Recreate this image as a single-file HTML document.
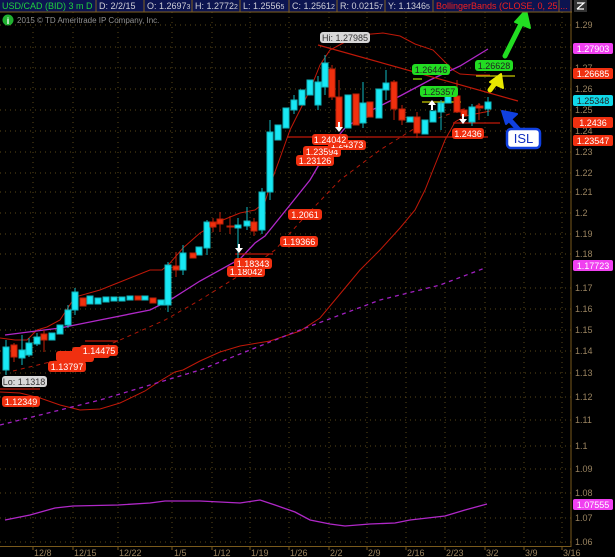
<!DOCTYPE html>
<html><head><meta charset="utf-8"><style>
html,body{margin:0;padding:0;background:#000;width:615px;height:557px;overflow:hidden}
svg{display:block}
text{font-family:"Liberation Sans",sans-serif}
</style></head><body>
<svg width="615" height="557" viewBox="0 0 615 557" xmlns="http://www.w3.org/2000/svg">
<rect width="615" height="557" fill="#000"/>
<!-- grid -->
<g stroke="#5a4818" stroke-width="1" stroke-dasharray="1,4">
<line x1="0" x2="571" y1="25" y2="25"/><line x1="0" x2="571" y1="47" y2="47"/><line x1="0" x2="571" y1="68" y2="68"/><line x1="0" x2="571" y1="89" y2="89"/><line x1="0" x2="571" y1="110" y2="110"/><line x1="0" x2="571" y1="131" y2="131"/><line x1="0" x2="571" y1="152" y2="152"/><line x1="0" x2="571" y1="173" y2="173"/><line x1="0" x2="571" y1="192" y2="192"/><line x1="0" x2="571" y1="213" y2="213"/><line x1="0" x2="571" y1="234" y2="234"/><line x1="0" x2="571" y1="254" y2="254"/><line x1="0" x2="571" y1="288" y2="288"/><line x1="0" x2="571" y1="309" y2="309"/><line x1="0" x2="571" y1="330" y2="330"/><line x1="0" x2="571" y1="351" y2="351"/><line x1="0" x2="571" y1="373" y2="373"/><line x1="0" x2="571" y1="397" y2="397"/><line x1="0" x2="571" y1="420" y2="420"/><line x1="0" x2="571" y1="446" y2="446"/><line x1="0" x2="571" y1="469" y2="469"/><line x1="0" x2="571" y1="493" y2="493"/><line x1="0" x2="571" y1="518" y2="518"/><line x1="0" x2="571" y1="542" y2="542"/>
<line x1="33" x2="33" y1="12" y2="546"/><line x1="73" x2="73" y1="12" y2="546"/><line x1="118" x2="118" y1="12" y2="546"/><line x1="172" x2="172" y1="12" y2="546"/><line x1="212" x2="212" y1="12" y2="546"/><line x1="250" x2="250" y1="12" y2="546"/><line x1="289" x2="289" y1="12" y2="546"/><line x1="329" x2="329" y1="12" y2="546"/><line x1="367" x2="367" y1="12" y2="546"/><line x1="406" x2="406" y1="12" y2="546"/><line x1="445" x2="445" y1="12" y2="546"/><line x1="485" x2="485" y1="12" y2="546"/><line x1="524" x2="524" y1="12" y2="546"/><line x1="562" x2="562" y1="12" y2="546"/>
</g>
<!-- axes -->
<line x1="571" y1="12" x2="571" y2="547" stroke="#7a5a1c"/>
<line x1="0" y1="546.5" x2="571" y2="546.5" stroke="#7a5a1c"/>
<g stroke="#7a5a1c"><line x1="33" x2="33" y1="546" y2="550"/><line x1="73" x2="73" y1="546" y2="550"/><line x1="118" x2="118" y1="546" y2="550"/><line x1="172" x2="172" y1="546" y2="550"/><line x1="212" x2="212" y1="546" y2="550"/><line x1="250" x2="250" y1="546" y2="550"/><line x1="289" x2="289" y1="546" y2="550"/><line x1="329" x2="329" y1="546" y2="550"/><line x1="367" x2="367" y1="546" y2="550"/><line x1="406" x2="406" y1="546" y2="550"/><line x1="445" x2="445" y1="546" y2="550"/><line x1="485" x2="485" y1="546" y2="550"/><line x1="524" x2="524" y1="546" y2="550"/><line x1="562" x2="562" y1="546" y2="550"/></g>
<g fill="#9a8460" font-size="9">
<text x="575" y="28">1.29</text><text x="575" y="71">1.27</text><text x="575" y="92">1.26</text><text x="575" y="113">1.25</text><text x="575" y="134">1.24</text><text x="575" y="155">1.23</text><text x="575" y="176">1.22</text><text x="575" y="195">1.21</text><text x="575" y="216">1.2</text><text x="575" y="237">1.19</text><text x="575" y="257">1.18</text><text x="575" y="291">1.17</text><text x="575" y="312">1.16</text><text x="575" y="333">1.15</text><text x="575" y="354">1.14</text><text x="575" y="376">1.13</text><text x="575" y="400">1.12</text><text x="575" y="423">1.11</text><text x="575" y="449">1.1</text><text x="575" y="472">1.09</text><text x="575" y="496">1.08</text><text x="575" y="521">1.07</text><text x="575" y="545">1.06</text>
<text x="34" y="556">12/8</text><text x="74" y="556">12/15</text><text x="119" y="556">12/22</text><text x="174" y="556">1/5</text><text x="213" y="556">1/12</text><text x="251" y="556">1/19</text><text x="290" y="556">1/26</text><text x="330" y="556">2/2</text><text x="368" y="556">2/9</text><text x="407" y="556">2/16</text><text x="446" y="556">2/23</text><text x="486" y="556">3/2</text><text x="525" y="556">3/9</text><text x="563" y="556">3/16</text>
</g>
<!-- lines -->
<polyline fill="none" stroke="#c01808" stroke-width="1" points="0,338 15,340 27,340 37,330 47,327 60,320 75,297 100,290 120,282 150,270 162,270 170,263 183,248 200,233 218,222 240,213 255,210 265,202 272,180 280,158 290,130 300,110 310,90 320,65 330,50 345,42 360,35 383,33 400,36 415,44 433,50 445,62 453,70 460,74 475,75 490,75"/>
<polyline fill="none" stroke="#c01808" stroke-width="1" points="0,392 20,393 40,398 60,405 80,410 100,409 120,403 145,391 160,381 175,372 183,370 200,361 220,352 240,346 270,341 300,331 320,318 335,300 345,288 360,270 380,250 400,228 415,210 425,190 435,165 445,140 455,122 465,116 480,113 490,111"/>
<polyline fill="none" stroke="#b01808" stroke-width="1" stroke-dasharray="4,4" points="13,371 50,362 85,355 120,340 165,320 200,300 240,275 275,250 300,222 340,180 380,150 420,125 460,110 482,104"/>
<polyline fill="none" stroke="#a020c0" stroke-width="1.3" stroke-dasharray="4,4" points="0,425 100,400 200,370 300,330 380,300 440,285 485,268"/>
<polyline fill="none" stroke="#b028c8" stroke-width="1.3" points="5,335 60,328 100,320 150,310 170,300 200,281 240,259 255,243 265,236 290,205 310,180 330,146 345,128 370,111 400,96 430,80 460,66 488,49"/>
<polyline fill="none" stroke="#b028c8" stroke-width="1.3" points="5,520 30,515 55,508 73,506 118,505 150,503 165,501 200,501 240,503 260,500 275,505 295,512 310,520 330,524 345,526 370,524 395,523 410,520 445,516 465,510 487,504"/>
<!-- trend/horizontal lines -->
<line x1="318" y1="45" x2="518" y2="101" stroke="#c01808" stroke-width="1.2"/>
<line x1="287" y1="137" x2="488" y2="137" stroke="#c01808" stroke-width="1.3"/>
<line x1="453" y1="123" x2="500" y2="123" stroke="#c01808" stroke-width="1.3"/>
<line x1="0" y1="389" x2="40" y2="389" stroke="#c01808" stroke-width="1.3"/>
<line x1="85" y1="341" x2="118" y2="341" stroke="#c01808" stroke-width="1.3"/>
<line x1="235" y1="254" x2="273" y2="254" stroke="#c01808" stroke-width="1.3"/>
<line x1="476" y1="76" x2="515" y2="76" stroke="#c8c800" stroke-width="1.3"/>
<line x1="422" y1="102" x2="461" y2="102" stroke="#c8c800" stroke-width="1.3"/>
<line x1="413" y1="79" x2="422" y2="79" stroke="#80c000" stroke-width="1.5"/>
<!-- candles -->
<g stroke-width="1">
<g stroke="#10b8c0" fill="#18e8f4">
<line x1="6" x2="6" y1="340" y2="375"/><rect x="3" y="347" width="6" height="23"/>
<line x1="22" x2="22" y1="335" y2="365"/><rect x="19" y="350" width="6" height="8"/>
<line x1="29" x2="29" y1="338" y2="357"/><rect x="26" y="343" width="6" height="12"/>
<line x1="37" x2="37" y1="333" y2="346"/><rect x="34" y="337" width="6" height="7"/>
<rect x="49" y="333" width="6" height="7"/><rect x="57" y="325" width="6" height="9"/>
<line x1="68" x2="68" y1="305" y2="328"/><rect x="65" y="310" width="6" height="15"/>
<line x1="75" x2="75" y1="288" y2="315"/><rect x="72" y="292" width="6" height="18"/>
<rect x="87" y="296" width="6" height="8"/><rect x="95" y="298" width="6" height="6"/><rect x="103" y="297" width="6" height="5"/><rect x="111" y="297" width="6" height="4"/><rect x="119" y="297" width="6" height="4"/><rect x="127" y="296" width="6" height="4"/><rect x="142" y="296" width="6" height="4"/><rect x="158" y="300" width="6" height="5"/>
<line x1="168" x2="168" y1="262" y2="312"/><rect x="165" y="265" width="6" height="40"/>
<line x1="183" x2="183" y1="245" y2="275"/><rect x="180" y="253" width="6" height="17"/>
<rect x="196" y="247" width="6" height="8"/>
<line x1="207" x2="207" y1="220" y2="255"/><rect x="204" y="222" width="6" height="26"/>
<line x1="238" x2="238" y1="218" y2="260"/><rect x="235" y="225" width="6" height="3"/>
<line x1="247" x2="247" y1="207" y2="230"/><rect x="244" y="221" width="6" height="5"/>
<line x1="262" x2="262" y1="188" y2="234"/><rect x="259" y="192" width="6" height="38"/>
<line x1="270" x2="270" y1="120" y2="200"/><rect x="267" y="132" width="6" height="60"/>
<rect x="275" y="125" width="6" height="15"/><rect x="283" y="108" width="6" height="20"/>
<line x1="294" x2="294" y1="95" y2="114"/><rect x="291" y="100" width="6" height="10"/>
<rect x="299" y="90" width="6" height="15"/><rect x="307" y="80" width="6" height="15"/>
<line x1="318" x2="318" y1="76" y2="110"/><rect x="315" y="82" width="6" height="23"/>
<line x1="325" x2="325" y1="55" y2="95"/><rect x="322" y="63" width="6" height="24"/>
<rect x="345" y="95" width="6" height="33"/>
<line x1="363" x2="363" y1="82" y2="128"/><rect x="360" y="103" width="6" height="20"/>
<rect x="376" y="89" width="6" height="29"/>
<line x1="386" x2="386" y1="70" y2="100"/><rect x="383" y="83" width="6" height="7"/>
<rect x="407" y="117" width="6" height="5"/><rect x="422" y="120" width="6" height="14"/>
<rect x="430" y="111" width="6" height="11"/><rect x="438" y="103" width="6" height="9"/>
<line x1="441" x2="441" y1="100" y2="130"/>
<rect x="445" y="96" width="6" height="7"/>
<line x1="472" x2="472" y1="104" y2="126"/><rect x="469" y="107" width="6" height="15"/>
<line x1="488" x2="488" y1="97" y2="116"/><rect x="485" y="102" width="6" height="7"/>
</g>
<g stroke="#c02008" fill="#f0300e">
<line x1="14" x2="14" y1="343" y2="362"/><rect x="11" y="345" width="6" height="12"/>
<line x1="44" x2="44" y1="330" y2="352"/><rect x="41" y="334" width="6" height="6"/>
<rect x="80" y="298" width="6" height="8"/><rect x="135" y="296" width="6" height="4"/><rect x="150" y="298" width="6" height="5"/>
<line x1="176" x2="176" y1="252" y2="277"/><rect x="173" y="266" width="6" height="4"/>
<rect x="190" y="253" width="6" height="5"/>
<line x1="220" x2="220" y1="212" y2="232"/><rect x="217" y="219" width="6" height="5"/>
<line x1="213" x2="213" y1="218" y2="232"/><rect x="210" y="222" width="6" height="5"/>
<line x1="230" x2="230" y1="216" y2="234"/><rect x="227" y="226" width="7" height="1"/>
<line x1="254" x2="254" y1="218" y2="236"/><rect x="251" y="222" width="6" height="9"/>
<line x1="332" x2="332" y1="65" y2="100"/><rect x="329" y="69" width="6" height="28"/>
<line x1="339" x2="339" y1="80" y2="130"/><rect x="336" y="97" width="6" height="31"/>
<rect x="353" y="94" width="6" height="31"/><rect x="367" y="102" width="6" height="15"/>
<line x1="394" x2="394" y1="80" y2="120"/><rect x="391" y="82" width="6" height="27"/>
<line x1="402" x2="402" y1="105" y2="125"/><rect x="399" y="109" width="6" height="11"/>
<line x1="417" x2="417" y1="112" y2="138"/><rect x="414" y="117" width="6" height="16"/>
<line x1="457" x2="457" y1="80" y2="113"/><rect x="454" y="96" width="6" height="16"/>
<rect x="461" y="110" width="6" height="6"/>
<line x1="479" x2="479" y1="103" y2="120"/><rect x="476" y="106" width="7" height="2"/>
</g>
</g>
<!-- white arrows -->
<g fill="#fff"><path d="M238,244 h2 v4 h3 l-4,5 l-4,-5 h3z"/><path d="M338,122 h2 v5 h3 l-4,5 l-4,-5 h3z"/><path d="M462,114 h2 v5 h3 l-4,5 l-4,-5 h3z"/><path d="M432,100 l4,5 h-3 v5 h-2 v-5 h-3z"/></g>
<!-- tags -->
<g font-size="9" fill="#fff" text-anchor="middle">
<g fill="#f03010"><rect x="56" y="351" width="38" height="11" rx="3"/><rect x="72" y="347" width="38" height="11" rx="3"/></g>
<rect x="80" y="345" width="38" height="11" rx="3" fill="#f03010"/><text x="99" y="354">1.14475</text>
<rect x="48" y="361" width="38" height="11" rx="3" fill="#f03010"/><text x="67" y="370">1.13797</text>
<rect x="2" y="396" width="38" height="11" rx="3" fill="#f03010"/><text x="21" y="405">1.12349</text>
<rect x="2" y="376" width="45" height="11" rx="3" fill="#d8d8d8"/><text x="24" y="385" fill="#333">Lo: 1.1318</text>
<rect x="227" y="266" width="38" height="11" rx="3" fill="#f03010"/><text x="246" y="275">1.18042</text>
<rect x="234" y="258" width="38" height="11" rx="3" fill="#f03010"/><text x="253" y="267">1.18343</text>
<rect x="280" y="236" width="38" height="11" rx="3" fill="#f03010"/><text x="299" y="245">1.19366</text>
<rect x="288" y="209" width="34" height="11" rx="3" fill="#f03010"/><text x="305" y="218">1.2061</text>
<rect x="296" y="155" width="38" height="11" rx="3" fill="#f03010"/><text x="315" y="164">1.23126</text>
<rect x="303" y="146" width="38" height="11" rx="3" fill="#f03010"/><text x="322" y="155">1.23594</text>
<rect x="328" y="140" width="38" height="10" rx="3" fill="#f03010"/><text x="347" y="148">1.24373</text>
<rect x="312" y="134" width="36" height="11" rx="3" fill="#f03010"/><text x="330" y="143">1.24042</text>
<rect x="452" y="128" width="32" height="11" rx="3" fill="#f03010"/><text x="468" y="137">1.2436</text>
<rect x="320" y="32" width="50" height="11" rx="3" fill="#d8d8d8"/><text x="345" y="41" fill="#333">Hi: 1.27985</text>
<rect x="412" y="64" width="38" height="11" rx="3" fill="#22dd22"/><text x="431" y="73" fill="#222">1.26446</text>
<rect x="420" y="86" width="38" height="11" rx="3" fill="#22dd22"/><text x="439" y="95" fill="#222">1.25357</text>
<rect x="475" y="60" width="38" height="11" rx="3" fill="#22dd22"/><text x="494" y="69" fill="#222">1.26628</text>
<rect x="573" y="43" width="40" height="11" rx="2" fill="#f040f0"/><text x="593" y="52">1.27903</text>
<rect x="573" y="68" width="40" height="11" rx="2" fill="#f03010"/><text x="593" y="77">1.26685</text>
<rect x="573" y="95" width="40" height="11" rx="2" fill="#10d8e8"/><text x="593" y="104" fill="#222">1.25348</text>
<rect x="573" y="117" width="40" height="11" rx="2" fill="#f03010"/><text x="593" y="126">1.2436</text>
<rect x="573" y="135" width="40" height="11" rx="2" fill="#f03010"/><text x="593" y="144">1.23547</text>
<rect x="573" y="260" width="40" height="11" rx="2" fill="#f040f0"/><text x="593" y="269">1.17723</text>
<rect x="573" y="499" width="40" height="11" rx="2" fill="#f040f0"/><text x="593" y="508">1.07555</text>
</g>
<!-- callout arrows -->
<g stroke-linecap="round">
<line x1="505" y1="56" x2="522" y2="22" stroke="#22dd22" stroke-width="5"/>
<path d="M526,10 L530,28 L515,22 Z" fill="#22dd22" stroke="#22dd22" stroke-width="2" stroke-linejoin="round"/>
<line x1="490" y1="90" x2="496" y2="82" stroke="#e8e800" stroke-width="5"/>
<path d="M501,74 L503,88 L490,82 Z" fill="#e8e800" stroke="#e8e800" stroke-width="2" stroke-linejoin="round"/>
<line x1="519" y1="130" x2="508" y2="118" stroke="#1040e0" stroke-width="5"/>
<path d="M502,111 L517,114 L506,124 Z" fill="#1040e0" stroke="#1040e0" stroke-width="2" stroke-linejoin="round"/>
</g>
<rect x="507" y="129" width="33" height="19" rx="4" fill="#fff" stroke="#1040e0" stroke-width="2.5"/>
<text x="523.5" y="143" font-size="13" fill="#1030c0" text-anchor="middle">ISL</text>
<!-- header -->
<rect x="0" y="0" width="572" height="12" fill="#0c1450"/>
<g stroke="#806020"><line x1="0" x2="572" y1="12" y2="12"/><line x1="96" x2="96" y1="0" y2="12"/><line x1="144" x2="144" y1="0" y2="12"/><line x1="192" x2="192" y1="0" y2="12"/><line x1="240" x2="240" y1="0" y2="12"/><line x1="289" x2="289" y1="0" y2="12"/><line x1="337" x2="337" y1="0" y2="12"/><line x1="385" x2="385" y1="0" y2="12"/><line x1="433" x2="433" y1="0" y2="12"/><line x1="559" x2="559" y1="0" y2="12"/><line x1="571" x2="571" y1="0" y2="12"/></g>
<g font-size="9" fill="#d0d0d8">
<text x="2" y="9" fill="#20d040">USD/CAD (BID) 3 m D</text>
<text x="99" y="9">D: 2/2/15</text><text x="147" y="9">O: 1.2697<tspan font-size="7">3</tspan></text><text x="195" y="9">H: 1.2772<tspan font-size="7">2</tspan></text><text x="243" y="9">L: 1.2556<tspan font-size="7">5</tspan></text><text x="292" y="9">C: 1.2561<tspan font-size="7">2</tspan></text><text x="340" y="9">R: 0.0215<tspan font-size="7">7</tspan></text><text x="388" y="9">Y: 1.1346<tspan font-size="7">5</tspan></text>
<text x="436" y="9" fill="#f02020">BollingerBands (CLOSE, 0, 25,...</text>
</g>
<rect x="574" y="0" width="13" height="12" fill="#333"/>
<path d="M577,9 h7 M577,3 h7 l-7,6" stroke="#fff" stroke-width="1.2" fill="none"/>
<circle cx="8" cy="20" r="5.5" fill="#20b030"/>
<text x="8" y="24" font-size="9" font-weight="bold" fill="#fff" text-anchor="middle">i</text>
<text x="17" y="23" font-size="8" fill="#909090">2015 © TD Ameritrade IP Company, Inc.</text>
</svg>
</body></html>
